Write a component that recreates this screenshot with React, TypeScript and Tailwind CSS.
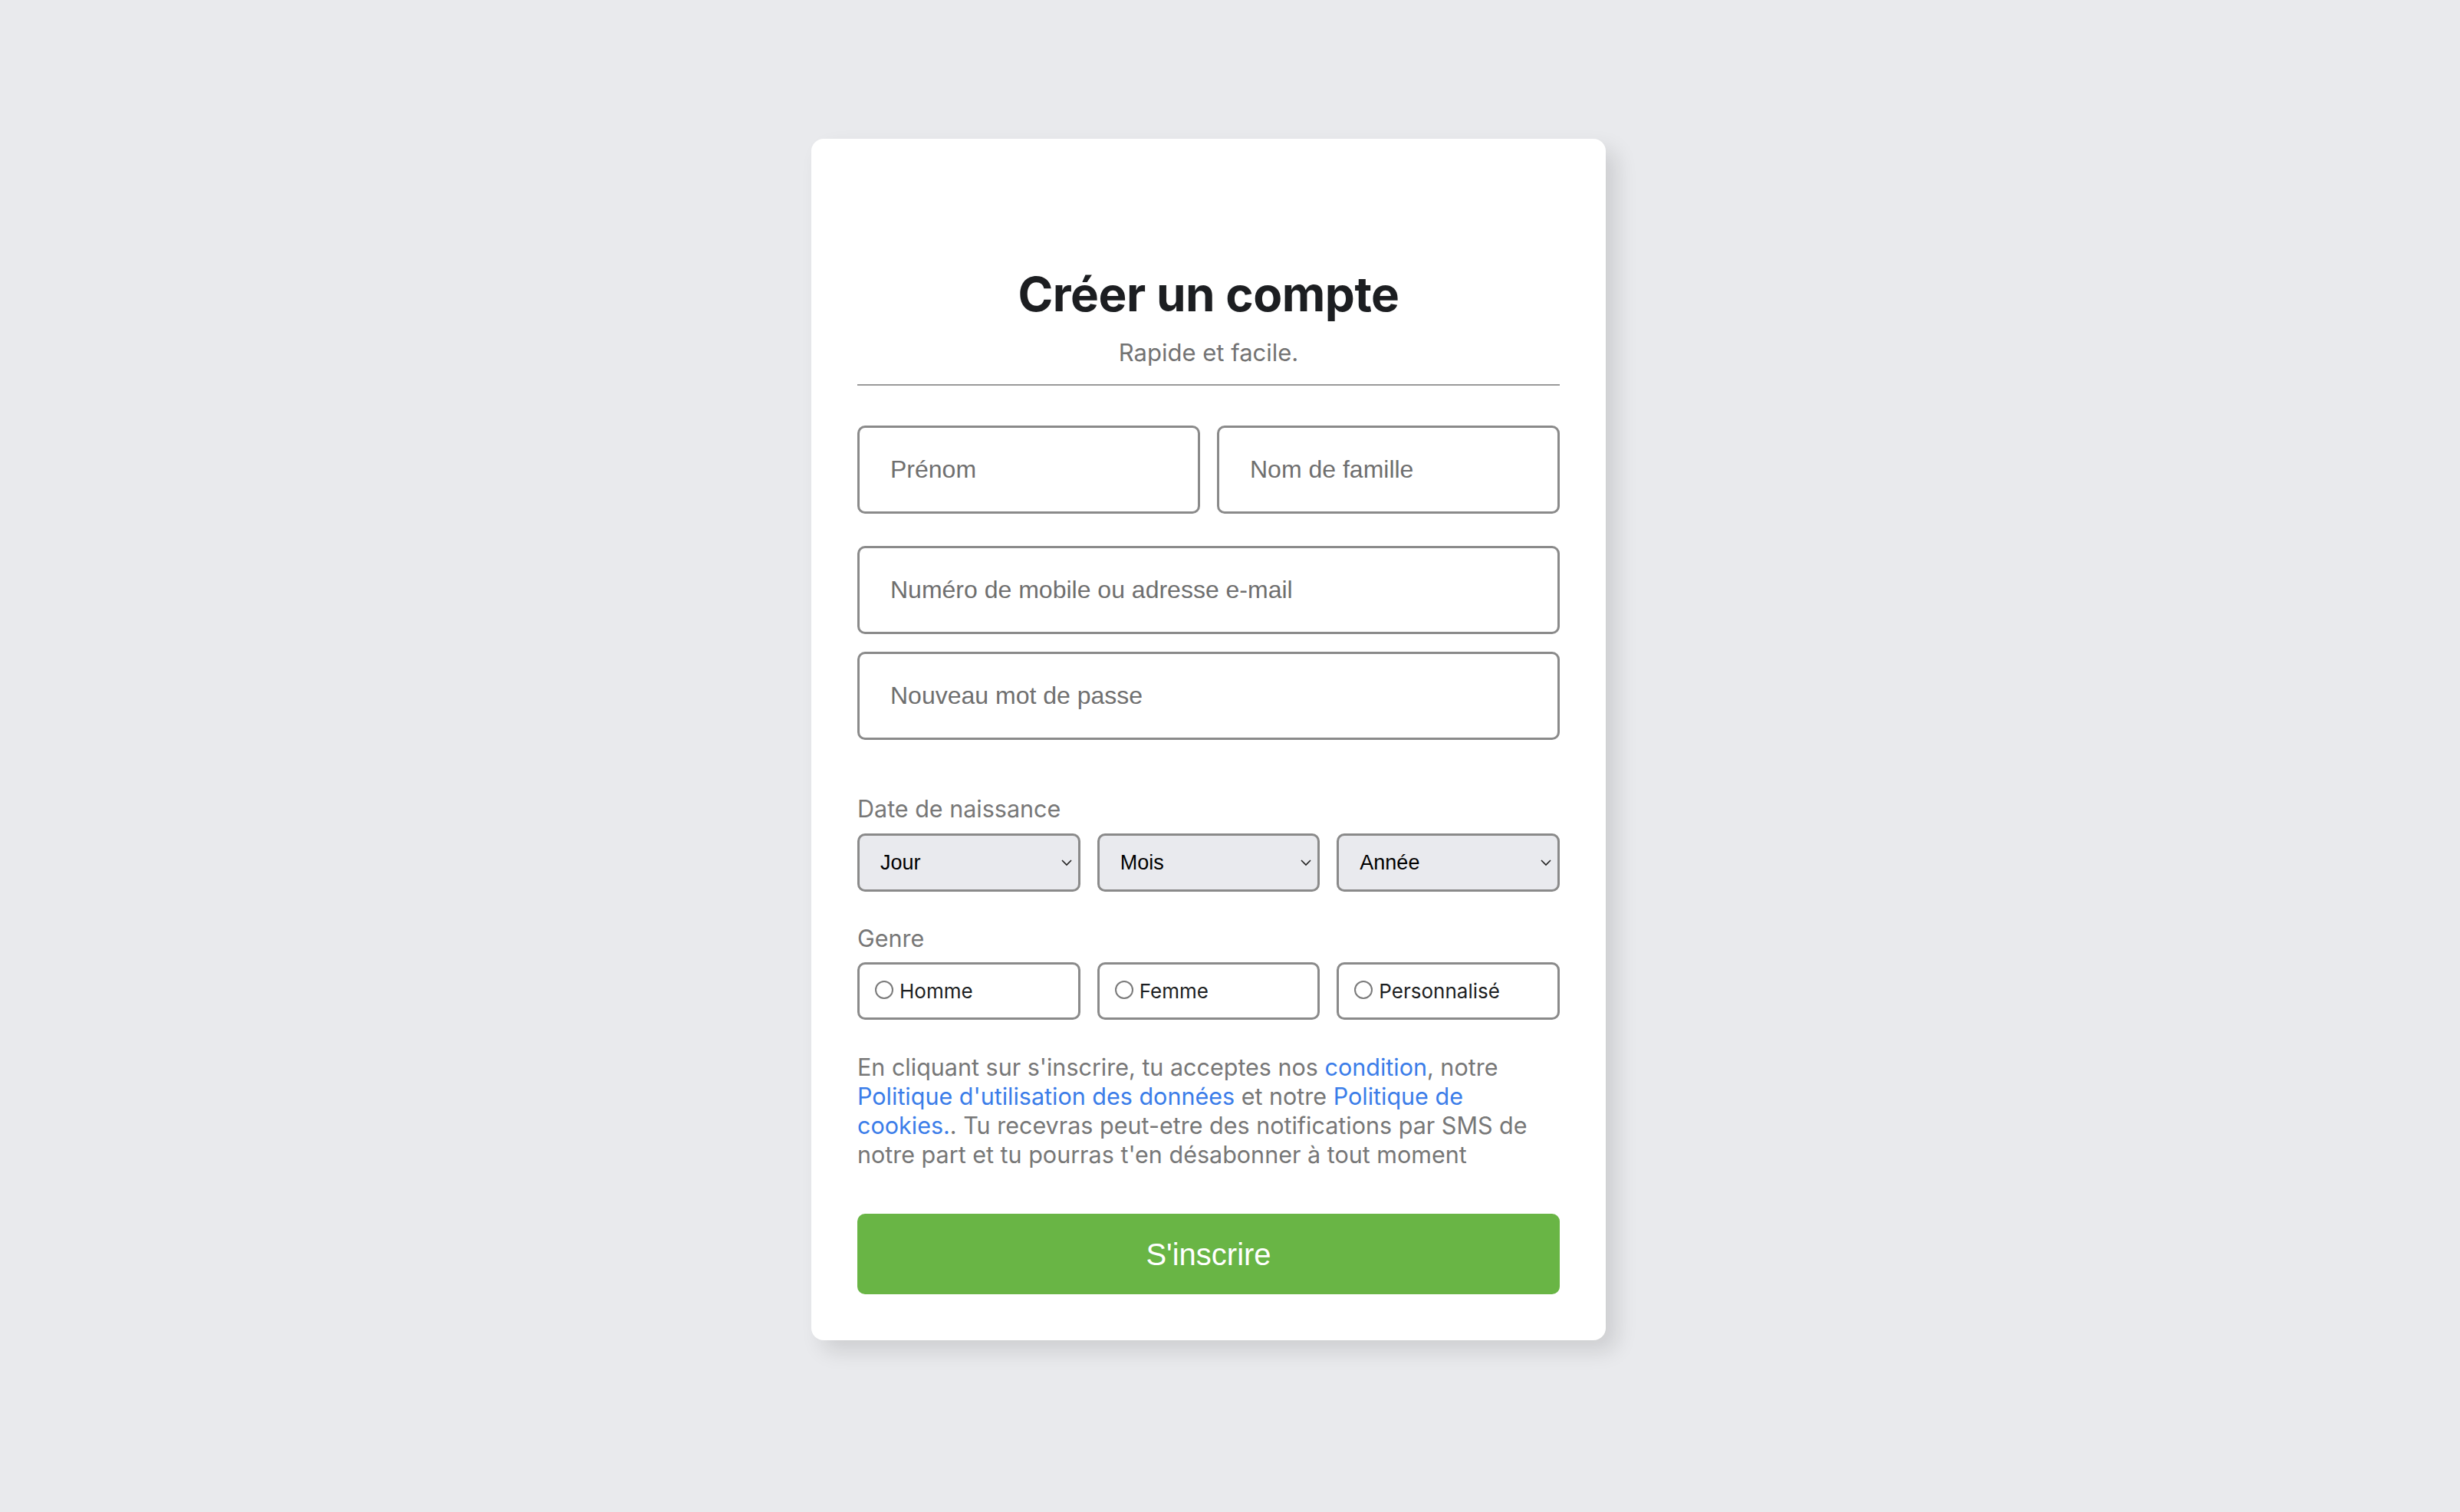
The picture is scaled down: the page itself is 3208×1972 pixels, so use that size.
import { useState } from "react";

const fieldClass =
  "h-[115px] w-full rounded-[10px] border-[3px] border-[#8a8a8a] bg-white px-[40px] text-[32px] text-[#1c1e21] outline-none placeholder:text-[#6f6f6f] [font-family:'Liberation_Sans',Arial,sans-serif]";

export default function App() {
  const [genre, setGenre] = useState("");

  return (
    <div className="min-h-[1972px] w-full bg-[#e9eaed] pt-[181px] pr-[56px] [font-family:Inter,'Noto_Sans',sans-serif]">
      <div className="mx-auto w-[1036px] rounded-[16px] bg-white px-[60px] pt-[165px] pb-[60px] shadow-[14px_14px_28px_rgba(0,0,0,0.12)]">
        <h1 className="text-center text-[62px] leading-[75px] font-bold tracking-[-0.5px] text-[#1c1e21]">Créer un compte</h1>
        <p className="mt-[21px] text-center text-[31px] leading-[36px] text-[#737373]">Rapide et facile.</p>
        <div className="mt-[23px] h-[2px] bg-[#9a9a9a]" />

        <div className="mt-[52px] grid grid-cols-2 gap-[22px]">
          <input className={fieldClass} placeholder="Prénom" />
          <input className={fieldClass} placeholder="Nom de famille" />
        </div>
        <input className={`${fieldClass} mt-[42px]`} placeholder="Numéro de mobile ou adresse e-mail" />
        <input className={`${fieldClass} mt-[23px]`} type="password" placeholder="Nouveau mot de passe" />

        <p className="mt-[72px] text-[30.5px] leading-[36px] text-[#777]">Date de naissance</p>
        <div className="mt-[14px] grid grid-cols-3 gap-[22px]">
          <DateSelect label="Jour" />
          <DateSelect label="Mois" />
          <DateSelect label="Année" />
        </div>

        <p className="mt-[43px] text-[30.5px] leading-[36px] text-[#777]">Genre</p>
        <div className="mt-[13px] grid grid-cols-3 gap-[22px]">
          {["Homme", "Femme", "Personnalisé"].map((g) => (
            <label
              key={g}
              className="flex h-[75px] items-center gap-[8px] rounded-[10px] border-[3px] border-[#8a8a8a] bg-white px-[20px] text-[26px] text-[#1c1e21]"
            >
              <input
                type="radio"
                name="genre"
                checked={genre === g}
                onChange={() => setGenre(g)}
                className="h-[24px] w-[24px] shrink-0 -translate-y-[2px] appearance-none rounded-full border-[2px] border-[#7a7a7a] bg-white checked:border-[7px] checked:border-[#1877f2]"
              />
              {g}
            </label>
          ))}
        </div>

        <p className="mt-[43px] text-[30.5px] leading-[38px] text-[#777]">
          En cliquant sur s'inscrire, tu acceptes nos <a className="text-[#3b7de9]">condition</a>, notre{" "}
          <a className="text-[#3b7de9]">Politique d'utilisation des données</a> et notre{" "}
          <a className="text-[#3b7de9]">Politique de cookies.</a>. Tu recevras peut-etre des notifications par SMS de notre part et tu pourras t'en désabonner à tout moment
        </p>

        <button
          type="button"
          className="mt-[58px] h-[105px] w-full rounded-[10px] bg-[#69b545] text-[40px] text-white [font-family:'Liberation_Sans',Arial,sans-serif]"
        >
          S'inscrire
        </button>
      </div>
    </div>
  );
}

function DateSelect({ label }: { label: string }) {
  return (
    <div className="relative">
      <select className="h-[76px] w-full appearance-none rounded-[10px] border-[3px] border-[#8a8a8a] bg-[#e9eaee] pl-[27px] pr-[40px] text-[27px] text-black outline-none [font-family:'Liberation_Sans',Arial,sans-serif]">
        <option>{label}</option>
      </select>
      <svg
        className="pointer-events-none absolute top-1/2 right-[10px] h-[16px] w-[16px] -translate-y-1/2"
        viewBox="0 0 16 16"
        fill="none"
        stroke="#222"
        strokeWidth="1.6"
      >
        <path d="M2 5l6 6 6-6" />
      </svg>
    </div>
  );
}
